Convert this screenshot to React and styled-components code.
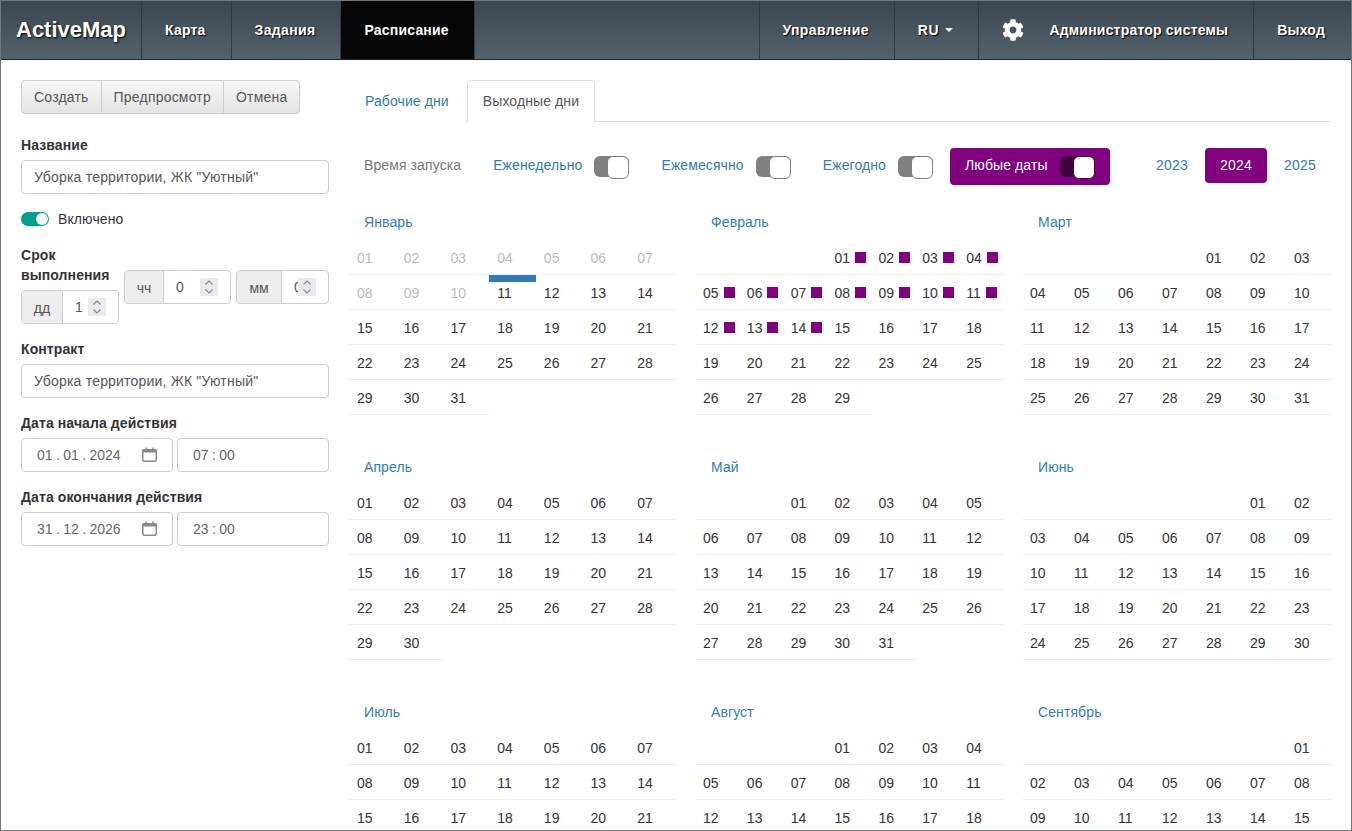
import React from 'react';
import styled, { createGlobalStyle } from 'styled-components';
import { FaCog } from 'react-icons/fa';

const PURPLE = '#800080';

const GlobalStyle = createGlobalStyle`
  html, body {
    margin: 0;
    padding: 0;
    height: 100%;
    overflow: hidden;
    background: #fff;
  }
  body {
    font-family: "Liberation Sans", Arial, sans-serif;
    font-size: 14px;
    line-height: 20px;
    color: #333;
  }
  * { box-sizing: border-box; }
`;

const Frame = styled.div`
  height: 100vh;
  border: 1px solid #777;
  overflow: hidden;
  background: #fff;
`;

/* navbar */
const Navbar = styled.nav`
  display: flex;
  height: 59px;
  background: linear-gradient(to bottom, #3a4650, #54626c);
  border-bottom: 1px solid #1d2328;
`;
const Brand = styled.div`
  display: flex;
  align-items: center;
  width: 141px;
  padding-left: 15px;
  font-size: 22px;
  font-weight: bold;
  color: #fff;
  text-shadow: 1px 1px 2px #000;
  border-right: 1px solid #2f3a42;
`;
const NavItem = styled.div`
  display: flex;
  align-items: center;
  padding: 0 25px 0 23px;
  font-weight: bold;
  letter-spacing: ${p => p.$spacing || 0.2}px;
  color: #fff;
  text-shadow: 1px 1px 1px #000;
  border-right: 1px solid ${p => (p.$last ? 'transparent' : '#2f3a42')};
  background: ${p => (p.$active ? '#060606' : 'transparent')};
`;
const NavSpacer = styled.div`
  flex: 1;
  border-right: 1px solid #2f3a42;
`;
const Caret = styled.span`
  width: 0;
  height: 0;
  margin-left: 6px;
  border-top: 4px solid #fff;
  border-left: 4px solid transparent;
  border-right: 4px solid transparent;
`;
const Gear = styled(FaCog)`
  width: 22px;
  height: 22px;
  margin-right: 25px;
  color: #fff;
`;

const Page = styled.div`
  display: flex;
  gap: 20px;
  padding: 20px 20px 0;
`;

/* left column */
const Sidebar = styled.aside`
  flex: 0 0 308px;
`;
const BtnGroup = styled.div`
  display: inline-flex;
  margin-bottom: 21px;
`;
const Btn = styled.div`
  height: 34px;
  padding: 6px 12px;
  color: #555;
  letter-spacing: 0.2px;
  background: linear-gradient(to bottom, #f7f7f7, #e4e4e4);
  border: 1px solid #ccc;
  margin-left: -1px;
  &:first-child { margin-left: 0; border-radius: 4px 0 0 4px; }
  &:last-child { border-radius: 0 4px 4px 0; }
`;
const Group = styled.div`
  margin-bottom: 15px;
`;
const Label = styled.div`
  font-weight: bold;
  letter-spacing: 0.1px;
  margin-bottom: 5px;
`;
const TextField = styled.div`
  height: 34px;
  padding: 6px 12px;
  color: #555;
  letter-spacing: 0.2px;
  border: 1px solid #ccc;
  border-radius: 4px;
  overflow: hidden;
  white-space: nowrap;
`;
const SwitchRow = styled.div`
  display: flex;
  align-items: center;
  gap: 9px;
  height: 20px;
  margin-bottom: 16px;
  letter-spacing: 0.1px;
  color: #333;
`;
const Switch = styled.span`
  position: relative;
  width: 28px;
  height: 14px;
  border-radius: 7px;
  background: #009e8e;
  &::after {
    content: '';
    position: absolute;
    right: 1px;
    top: 1px;
    width: 12px;
    height: 12px;
    border-radius: 50%;
    background: #fff;
  }
`;
const Duration = styled.div`
  display: flex;
  gap: 5px;
  margin-bottom: 15px;
`;
const DayCol = styled.div`
  flex: 0 0 98px;
`;
const TimeGroups = styled.div`
  display: flex;
  flex: 1;
  gap: 5px;
  margin-top: 25px;
`;
const NumGroup = styled.div`
  display: flex;
  width: ${p => p.$width}px;
  height: 34px;
  border: 1px solid #ccc;
  border-radius: 4px;
  overflow: hidden;
  background: #fff;
`;
const Addon = styled.div`
  flex: 0 0 ${p => p.$width}px;
  padding-top: 7px;
  text-align: center;
  color: #555;
  background: #eee;
  border-right: 1px solid #ccc;
`;
const NumValue = styled.div`
  position: relative;
  flex: 1;
  padding: 6px 12px;
  color: #555;
  overflow: hidden;
`;
const Spin = styled.svg`
  position: absolute;
  right: 12px;
  top: 7px;
  width: 18px;
  height: 18px;
  background: #e9e9ef;
`;
const DateRow = styled.div`
  display: flex;
  gap: 4px;
`;
const DateField = styled.div`
  display: flex;
  align-items: center;
  justify-content: space-between;
  flex: 1;
  height: 34px;
  padding: 0 15px;
  color: #666;
  word-spacing: -0.5px;
  border: 1px solid #ccc;
  border-radius: 4px;
`;
const CalIcon = styled.svg`
  width: 15px;
  height: 15px;
  margin-top: -2px;
`;

/* right column */
const Main = styled.main`
  flex: 0 0 982px;
`;
const Tabs = styled.div`
  display: flex;
  gap: 2px;
  height: 42px;
  letter-spacing: 0.1px;
  border-bottom: 1px solid #ddd;
`;
const Tab = styled.div`
  height: 42px;
  padding: 10px 15px;
  color: ${p => (p.$active ? '#555' : '#337ab7')};
  background: #fff;
  border: 1px solid ${p => (p.$active ? '#ddd' : 'transparent')};
  border-bottom-color: ${p => (p.$active ? '#fff' : 'transparent')};
  border-radius: 4px 4px 0 0;
`;
const Toolbar = styled.div`
  display: flex;
  align-items: flex-start;
  gap: 2px;
  margin-top: 26px;
  margin-bottom: 27px;
  letter-spacing: 0.1px;
`;
const Pill = styled.div`
  display: flex;
  align-items: center;
  gap: 12px;
  height: 37px;
  padding: 0 15px 3px;
  border-radius: 4px;
  color: ${p => (p.$active ? '#fff' : p.$muted ? '#777' : '#337ab7')};
  background: ${p => (p.$active ? PURPLE : 'transparent')};
`;
const YearPill = styled.div`
  width: 62px;
  height: 35px;
  line-height: 34px;
  text-align: center;
  border-radius: 4px;
  letter-spacing: 0.2px;
  color: ${p => (p.$active ? '#fff' : '#337ab7')};
  background: ${p => (p.$active ? PURPLE : 'transparent')};
`;
const Years = styled.div`
  display: flex;
  gap: 2px;
  margin-left: auto;
`;
const Toggle = styled.span`
  display: flex;
  justify-content: flex-end;
  width: 35px;
  height: 21px;
  margin-top: 3px;
  border-radius: 6px;
  background: ${p => (p.$dark ? '#42003f' : '#808080')};
  &::after {
    content: '';
    width: 20px;
    height: 21px;
    background: #fff;
    border: 1px solid ${p => (p.$dark ? '#42003f' : '#808080')};
    border-radius: 6px;
  }
`;
const Months = styled.div`
  display: grid;
  grid-template-columns: 327px 307px 308px;
  column-gap: 20px;
  row-gap: 42px;
`;
const MonthName = styled.div`
  padding-left: 15px;
  margin-bottom: 8px;
  letter-spacing: 0.1px;
  color: #337ab7;
`;
const Days = styled.div`
  display: grid;
  grid-template-columns: repeat(7, 1fr);
  grid-auto-rows: 35px;
`;
const Day = styled.div`
  position: relative;
  display: flex;
  align-items: center;
  gap: 5px;
  padding: 1px 0 0 ${p => (p.$wide ? 8 : 7)}px;
  white-space: nowrap;
  color: ${p => (p.$past ? '#bbb' : '#333')};
  border-bottom: 1px solid #eee;
  ${p =>
    p.$today &&
    `&::before {
      content: '';
      position: absolute;
      left: 0;
      right: 0;
      top: 0;
      height: 7px;
      background: #337ab7;
    }`}
`;
const Mark = styled.span`
  flex: none;
  width: 11px;
  height: 11px;
  margin-top: -1px;
  background: ${PURPLE};
`;

const pad = n => String(n).padStart(2, '0');

const MONTHS = [
  { name: 'Январь', offset: 0, days: 31 },
  { name: 'Февраль', offset: 3, days: 29 },
  { name: 'Март', offset: 4, days: 31 },
  { name: 'Апрель', offset: 0, days: 30 },
  { name: 'Май', offset: 2, days: 31 },
  { name: 'Июнь', offset: 5, days: 30 },
  { name: 'Июль', offset: 0, days: 31 },
  { name: 'Август', offset: 3, days: 31 },
  { name: 'Сентябрь', offset: 6, days: 30 },
];

const Spinner = () => (
  <Spin viewBox="0 0 18 18">
    <path d="M5.5 6.5 9 3l3.5 3.5M5.5 11.5 9 15l3.5-3.5" fill="none" stroke="#8a8a8a" strokeWidth="1.2" />
  </Spin>
);

const Calendar = () => (
  <CalIcon viewBox="0 0 15 15">
    <rect x="0.75" y="2.75" width="13.5" height="11.5" rx="1.5" fill="none" stroke="#888" strokeWidth="1.5" />
    <rect x="0.5" y="2.5" width="14" height="3" fill="#888" />
    <path d="M4 0.5v3M11 0.5v3" stroke="#888" strokeWidth="1.5" />
  </CalIcon>
);

const Month = ({ month, index }) => {
  const wide = index % 3 === 0;
  const cells = [];
  for (let i = 0; i < month.offset; i++) cells.push(<Day key={'e' + i} />);
  for (let d = 1; d <= month.days; d++) {
    cells.push(
      <Day key={d} $wide={wide} $past={index === 0 && d < 11} $today={index === 0 && d === 11}>
        {pad(d)}
        {index === 1 && d <= 14 && <Mark />}
      </Day>
    );
  }
  return (
    <div>
      <MonthName>{month.name}</MonthName>
      <Days>{cells}</Days>
    </div>
  );
};

const App = () => {
  return (
    <Frame>
      <GlobalStyle />
      <Navbar>
        <Brand>ActiveMap</Brand>
        <NavItem>Карта</NavItem>
        <NavItem $spacing={0.35}>Задания</NavItem>
        <NavItem $active>Расписание</NavItem>
        <NavSpacer />
        <NavItem $spacing={0.35}>Управление</NavItem>
        <NavItem $spacing={0.7}>RU<Caret /></NavItem>
        <NavItem><Gear />Администратор системы</NavItem>
        <NavItem $last>Выход</NavItem>
      </Navbar>
      <Page>
        <Sidebar>
          <BtnGroup>
            <Btn>Создать</Btn>
            <Btn>Предпросмотр</Btn>
            <Btn>Отмена</Btn>
          </BtnGroup>
          <Group>
            <Label>Название</Label>
            <TextField>Уборка территории, ЖК "Уютный"</TextField>
          </Group>
          <SwitchRow><Switch />Включено</SwitchRow>
          <Duration>
            <DayCol>
              <Label>Срок выполнения</Label>
              <NumGroup $width={98}>
                <Addon $width={41}>дд</Addon>
                <NumValue>1<Spinner /></NumValue>
              </NumGroup>
            </DayCol>
            <TimeGroups>
              <NumGroup $width={107}>
                <Addon $width={39}>чч</Addon>
                <NumValue>0<Spinner /></NumValue>
              </NumGroup>
              <NumGroup $width={93}>
                <Addon $width={45}>мм</Addon>
                <NumValue>0<Spinner /></NumValue>
              </NumGroup>
            </TimeGroups>
          </Duration>
          <Group>
            <Label>Контракт</Label>
            <TextField>Уборка территории, ЖК "Уютный"</TextField>
          </Group>
          <Group>
            <Label>Дата начала действия</Label>
            <DateRow>
              <DateField>01 . 01 . 2024<Calendar /></DateField>
              <DateField>07 : 00</DateField>
            </DateRow>
          </Group>
          <Group>
            <Label>Дата окончания действия</Label>
            <DateRow>
              <DateField>31 . 12 . 2026<Calendar /></DateField>
              <DateField>23 : 00</DateField>
            </DateRow>
          </Group>
        </Sidebar>
        <Main>
          <Tabs>
            <Tab>Рабочие дни</Tab>
            <Tab $active>Выходные дни</Tab>
          </Tabs>
          <Toolbar>
            <Pill $muted>Время запуска</Pill>
            <Pill>Еженедельно<Toggle /></Pill>
            <Pill>Ежемесячно<Toggle /></Pill>
            <Pill>Ежегодно<Toggle /></Pill>
            <Pill $active>Любые даты<Toggle $dark /></Pill>
            <Years>
              <YearPill>2023</YearPill>
              <YearPill $active>2024</YearPill>
              <YearPill>2025</YearPill>
            </Years>
          </Toolbar>
          <Months>
            {MONTHS.map((m, i) => (
              <Month key={m.name} month={m} index={i} />
            ))}
          </Months>
        </Main>
      </Page>
    </Frame>
  );
};

export default App;
